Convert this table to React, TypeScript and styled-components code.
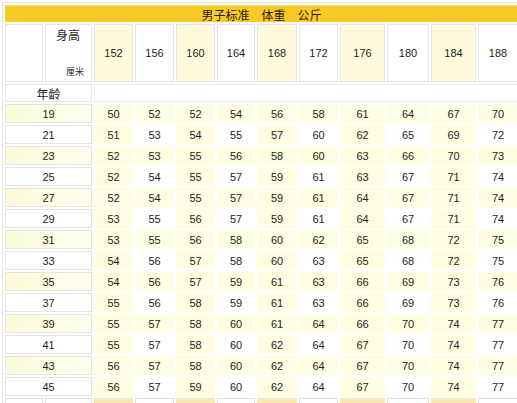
import styled, { createGlobalStyle } from "styled-components";

const heights = [152, 156, 160, 164, 168, 172, 176, 180, 184, 188];

const rows: [number, number[]][] = [
  [19, [50, 52, 52, 54, 56, 58, 61, 64, 67, 70]],
  [21, [51, 53, 54, 55, 57, 60, 62, 65, 69, 72]],
  [23, [52, 53, 55, 56, 58, 60, 63, 66, 70, 73]],
  [25, [52, 54, 55, 57, 59, 61, 63, 67, 71, 74]],
  [27, [52, 54, 55, 57, 59, 61, 64, 67, 71, 74]],
  [29, [53, 55, 56, 57, 59, 61, 64, 67, 71, 74]],
  [31, [53, 55, 56, 58, 60, 62, 65, 68, 72, 75]],
  [33, [54, 56, 57, 58, 60, 63, 65, 68, 72, 75]],
  [35, [54, 56, 57, 59, 61, 63, 66, 69, 73, 76]],
  [37, [55, 56, 58, 59, 61, 63, 66, 69, 73, 76]],
  [39, [55, 57, 58, 60, 61, 64, 66, 70, 74, 77]],
  [41, [55, 57, 58, 60, 62, 64, 67, 70, 74, 77]],
  [43, [56, 57, 58, 60, 62, 64, 67, 70, 74, 77]],
  [45, [56, 57, 59, 60, 62, 64, 67, 70, 74, 77]],
];

const GlobalStyle = createGlobalStyle`
  html, body {
    margin: 0;
    padding: 0;
    background: #ffffff;
    overflow: hidden;
  }
`;

const App = () => {
  return (
    <>
      <GlobalStyle />
      <Sheet>
        <Title>男子标准　体重　公斤</Title>

        <HeadCell />
        <CornerCell>
          <CornerTop>身高</CornerTop>
          <CornerUnit>厘米</CornerUnit>
        </CornerCell>
        {heights.map((h, i) => (
          <HeadCell key={h} tinted={i % 2 === 0}>
            {h}
          </HeadCell>
        ))}

        <AgeLabel>年龄</AgeLabel>
        <BlankRow />

        {rows.map(([age, values], r) => (
          <Row key={age}>
            <AgeCell tinted={r % 2 === 0}>{age}</AgeCell>
            {values.map((v, c) => (
              <ValueCell key={c} tinted={r % 2 === 0 || c % 2 === 0}>
                {v}
              </ValueCell>
            ))}
          </Row>
        ))}

        <FootCell>体重</FootCell>
        <FootCell>公斤</FootCell>
        {heights.map((h, i) => (
          <FootCell key={h} tinted={i % 2 === 0} />
        ))}
      </Sheet>
    </>
  );
};

type TTint = {
  tinted?: boolean;
};

const Sheet = styled.div`
  display: grid;
  grid-template-columns: 38px 47px 39px 39px 39px 38px 40px 39px 45px 42px 45px 40px;
  grid-template-rows: 17px 58px 18px;
  grid-auto-rows: 19px;
  gap: 2px;
  width: max-content;
  margin: 2px 0 0 2px;
  padding: 2px;
  border: 1px solid #e4e4e4;
  border-right: none;
  font-family: "Liberation Sans", Arial, sans-serif;
  font-size: 11px;
  color: #1e1e1e;
`;

const Title = styled.div`
  grid-column: 1 / -1;
  display: flex;
  align-items: center;
  justify-content: center;
  background: #f9c928;
  border-top: 1px solid #fbdc74;
  font-family: "Noto Sans CJK SC", sans-serif;
  font-size: 12px;
  color: #2a1e00;
`;

const HeadCell = styled.div<TTint>`
  display: flex;
  align-items: center;
  justify-content: center;
  border: 1px solid #e6e6e6;
  background: ${({ tinted }) => (tinted ? "#fdfbdc" : "#ffffff")};
`;

const CornerCell = styled.div`
  display: flex;
  flex-direction: column;
  justify-content: space-between;
  border: 1px solid #e6e6e6;
  padding: 3px 7px 4px 0;
  font-family: "Noto Sans CJK SC", sans-serif;
`;

const CornerTop = styled.div`
  text-align: center;
  padding-left: 6px;
  font-size: 12px;
  line-height: 14px;
`;

const CornerUnit = styled.div`
  text-align: right;
  font-size: 9px;
  line-height: 10px;
`;

const AgeLabel = styled.div`
  grid-column: span 2;
  display: flex;
  align-items: center;
  justify-content: center;
  border: 1px solid #e6e6e6;
  font-family: "Noto Sans CJK SC", sans-serif;
  font-size: 12px;
`;

const BlankRow = styled.div`
  grid-column: span 10;
  border: 1px solid #ececec;
`;

const Row = styled.div`
  display: contents;
`;

const AgeCell = styled.div<TTint>`
  grid-column: span 2;
  display: flex;
  align-items: center;
  justify-content: center;
  border: 1px solid #e4e4e4;
  background: ${({ tinted }) =>
    tinted ? "linear-gradient(90deg, #fcfad8, #fffeef)" : "#ffffff"};
`;

const ValueCell = styled.div<TTint>`
  display: flex;
  align-items: center;
  justify-content: center;
  background: ${({ tinted }) => (tinted ? "#fffde2" : "#ffffff")};
`;

const FootCell = styled.div<TTint>`
  display: flex;
  justify-content: center;
  padding-top: 2px;
  border: 1px solid ${({ tinted }) => (tinted ? "#fbe7b2" : "#e2e2e2")};
  background: ${({ tinted }) => (tinted ? "#fbe7b2" : "#ffffff")};
  font-family: "Noto Sans CJK SC", sans-serif;
  font-size: 11px;
  color: #444;
`;

export default App;
